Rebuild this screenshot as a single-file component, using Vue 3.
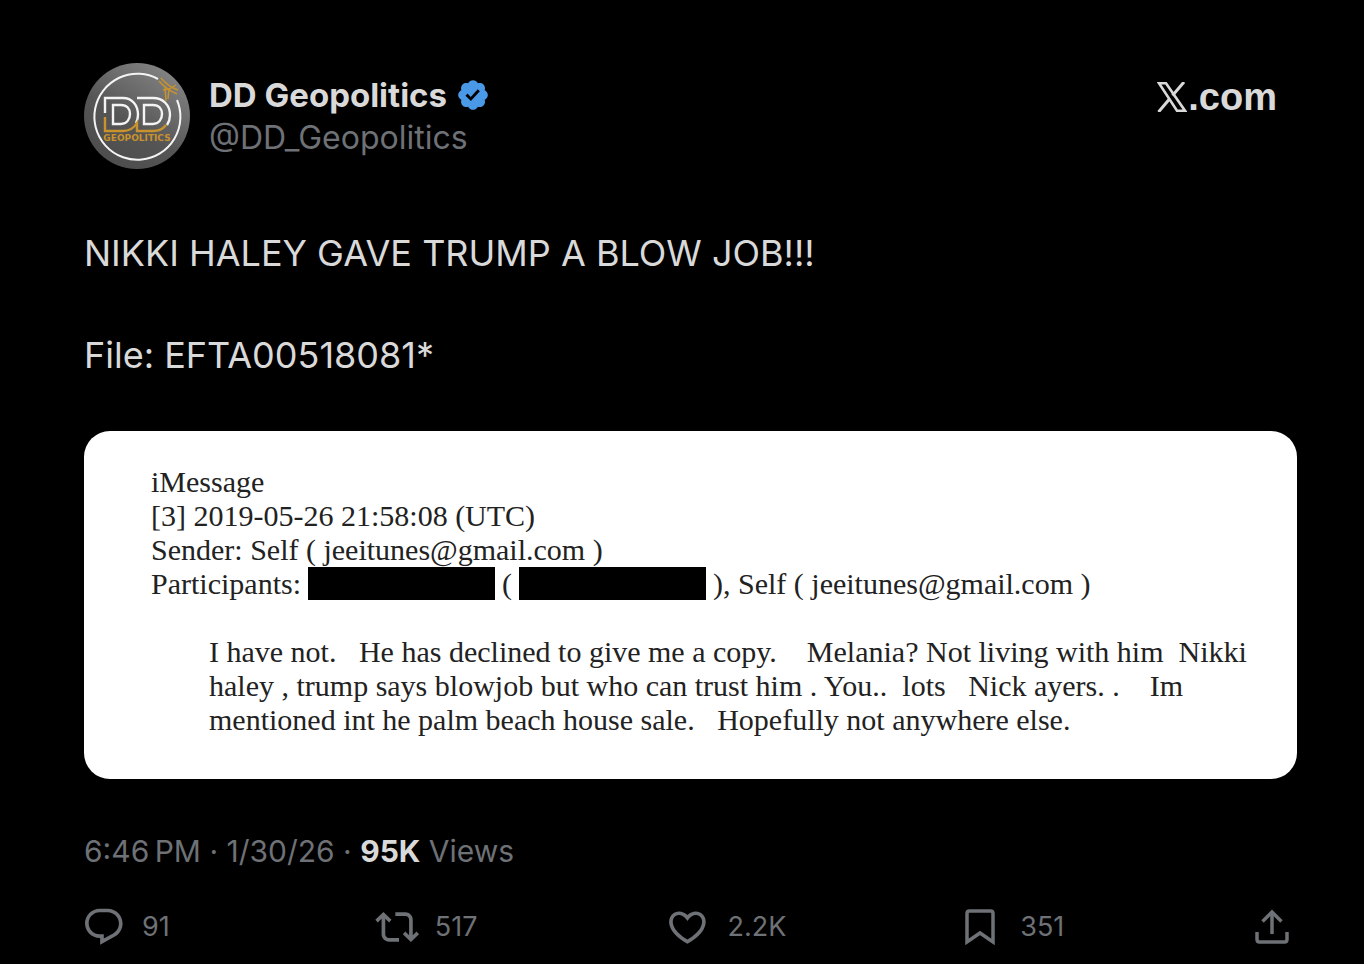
<script setup>
import { ref } from 'vue'

const author = {
  name: 'DD Geopolitics',
  handle: '@DD_Geopolitics'
}

const paragraphs = [
  'NIKKI HALEY GAVE TRUMP A BLOW JOB!!!',
  'File: EFTA00518081*'
]

// Spacing inside the message is kept as typed
const messageLines = [
  'I have not.   He has declined to give me a copy.    Melania? Not living with him  Nikki',
  'haley , trump says blowjob but who can trust him . You..  lots   Nick ayers. .    Im',
  'mentioned int he palm beach house sale.   Hopefully not anywhere else.'
]

const stats = ref({
  replies: '91',
  reposts: '517',
  likes: '2.2K',
  bookmarks: '351'
})
</script>

<template>
  <article class="post">
    <header class="post-header">
      <svg class="avatar" viewBox="0 0 106 106" aria-hidden="true">
        <defs>
          <linearGradient id="disc" x1="0.1" y1="1" x2="0.75" y2="0">
            <stop offset="0" stop-color="#4b4b4c" />
            <stop offset="0.45" stop-color="#555556" />
            <stop offset="1" stop-color="#858586" />
          </linearGradient>
        </defs>
        <circle cx="53" cy="53" r="53" fill="url(#disc)" />
        <g fill="none" stroke="#f4f4f4" stroke-width="2.4">
          <path d="M74 16A43 43 0 1 0 93 37" stroke-width="2" />
          <path d="M21 50V35H39C48 35 54 42 54 52C54 55 53 58 52 60" />
          <path d="M53 35H69C79 35 86 42 86 52C86 56 85 59 83 62" />
          <path d="M29 42H37C43 42 46 46 46 51C46 56 43 61 37 61H29Z" />
          <path d="M60 42H69C75 42 78 46 78 51C78 56 75 61 69 61H60Z" />
        </g>
        <g fill="none" stroke="#c8922d" stroke-width="2.4">
          <path d="M21 54V68H39C45 68 50 65 53 60V68H69C75 68 79 66 82 62" />
          <path d="M75 18C80 24 86 28 93 31M77 15C82 21 88 25 94 27M81 24L82 38M85 25L84 36M79 27C84 27 88 25 92 22" stroke-width="1.5" />
        </g>
        <text class="avatar-text" x="53" y="78" text-anchor="middle">GEOPOLITICS</text>
      </svg>
      <div class="author">
        <div class="name-row">
          <span class="name">{{ author.name }}</span>
          <svg class="badge" viewBox="1.5 1.5 19 19" role="img" aria-label="Verified account">
            <path fill="#4a99e9" d="M20.396 11c-.018-.646-.215-1.275-.57-1.816-.354-.54-.852-.972-1.438-1.246.223-.607.27-1.264.14-1.897-.131-.634-.437-1.218-.882-1.687-.47-.445-1.053-.75-1.687-.882-.633-.13-1.29-.083-1.897.14-.273-.587-.704-1.086-1.245-1.44S11.647 1.62 11 1.604c-.646.017-1.273.213-1.813.568s-.969.854-1.24 1.44c-.608-.223-1.267-.272-1.902-.14-.635.13-1.22.436-1.69.882-.445.47-.749 1.055-.878 1.688-.13.633-.08 1.29.144 1.896-.587.274-1.087.705-1.443 1.245-.356.54-.555 1.17-.574 1.817.02.647.218 1.276.574 1.817.356.54.856.972 1.443 1.245-.224.606-.274 1.263-.144 1.896.13.634.433 1.218.877 1.688.47.443 1.054.747 1.687.878.633.132 1.29.084 1.897-.136.274.586.705 1.084 1.246 1.439.54.354 1.17.551 1.816.569.647-.016 1.276-.213 1.817-.567s.972-.854 1.245-1.44c.604.239 1.266.296 1.903.164.636-.132 1.22-.447 1.68-.907.46-.46.776-1.044.908-1.681s.075-1.299-.165-1.903c.586-.274 1.084-.705 1.439-1.246.354-.54.551-1.17.569-1.816z" />
            <path fill="#000" d="M9.662 14.85l-3.429-3.428 1.293-1.302 2.072 2.072 4.4-4.794 1.347 1.246z" />
          </svg>
        </div>
        <a class="handle" href="#">{{ author.handle }}</a>
      </div>
      <a class="site" href="#" aria-label="X.com">
        <svg class="site-logo" viewBox="0 0 30 30" aria-hidden="true">
          <path d="M2 1.300H9L28 28.700H20Z" fill="none" stroke="#d9d9d9" stroke-width="2.6" />
          <path d="M27 0L15.500 13.500M1.500 30L12.500 17" fill="none" stroke="#d9d9d9" stroke-width="3" />
        </svg>
        <span>.com</span>
      </a>
    </header>

    <div class="post-text">
      <p v-for="text in paragraphs" :key="text">{{ text }}</p>
    </div>

    <section class="document">
      <p>iMessage</p>
      <p>[3] 2019-05-26 21:58:08 (UTC)</p>
      <p>Sender: Self ( jeeitunes@gmail.com )</p>
      <p class="participants">
        <span>Participants:</span>
        <span class="redacted"></span>
        <span>(</span>
        <span class="redacted"></span>
        <span>), Self ( jeeitunes@gmail.com )</span>
      </p>
      <div class="message">
        <p v-for="line in messageLines" :key="line">{{ line }}</p>
      </div>
    </section>

    <p class="meta">6:46&#8239;PM · 1/30/26 · <strong>95K</strong> Views</p>

    <footer class="actions">
      <button type="button" class="action">
        <svg viewBox="1.2 0 24 24" aria-hidden="true">
          <path fill="currentColor" d="M1.751 10c0-4.42 3.584-8 8.005-8h4.366c4.49 0 8.129 3.64 8.129 8.13 0 2.96-1.607 5.68-4.196 7.11l-8.054 4.46v-3.69h-.067c-4.49.1-8.183-3.51-8.183-8.01zm8.005-6c-3.317 0-6.005 2.69-6.005 6 0 3.37 2.77 6.08 6.138 6.01l.351-.01h1.761v2.3l5.087-2.81c1.951-1.08 3.163-3.13 3.163-5.36 0-3.39-2.744-6.13-6.129-6.13H9.756z" />
        </svg>
        <span>{{ stats.replies }}</span>
      </button>
      <button type="button" class="action">
        <svg viewBox="1 0 24 24" aria-hidden="true">
          <path fill="currentColor" d="M4.5 3.88l4.432 4.14-1.364 1.46L5.5 7.55V16c0 1.1.896 2 2 2H13v2H7.5c-2.209 0-4-1.79-4-4V7.55L1.432 9.48.068 8.02 4.5 3.88zM16.5 6H11V4h5.5c2.209 0 4 1.79 4 4v8.45l2.068-1.93 1.364 1.46-4.432 4.14-4.432-4.14 1.364-1.46 2.068 1.93V8c0-1.1-.896-2-2-2z" />
        </svg>
        <span>{{ stats.reposts }}</span>
      </button>
      <button type="button" class="action">
        <svg viewBox="2.5 0 24 24" aria-hidden="true">
          <path fill="currentColor" d="M16.697 5.5c-1.222-.06-2.679.51-3.89 2.16l-.805 1.09-.806-1.09C9.984 6.01 8.526 5.44 7.304 5.5c-1.243.07-2.349.78-2.91 1.91-.552 1.12-.633 2.78.479 4.82 1.074 1.97 3.257 4.27 7.129 6.61 3.87-2.34 6.052-4.64 7.126-6.61 1.111-2.04 1.03-3.7.477-4.82-.561-1.13-1.666-1.84-2.908-1.91zm4.187 7.69c-1.351 2.48-4.001 5.12-8.379 7.67l-.503.3-.504-.3c-4.379-2.55-7.029-5.19-8.382-7.67-1.36-2.5-1.41-4.86-.514-6.67.887-1.79 2.647-2.91 4.601-3.01 1.651-.09 3.368.56 4.798 2.01 1.429-1.45 3.146-2.1 4.796-2.01 1.954.1 3.714 1.22 4.601 3.01.896 1.81.846 4.17-.514 6.67z" />
        </svg>
        <span>{{ stats.likes }}</span>
      </button>
      <button type="button" class="action">
        <svg viewBox="-3 0 44 44" aria-hidden="true">
          <path fill="none" stroke="currentColor" stroke-width="3.500" d="M2 37V8.500Q2 6 4.500 6H25.500Q28 6 28 8.500V37L15 28Z" />
        </svg>
        <span>{{ stats.bookmarks }}</span>
      </button>
      <button type="button" class="action" aria-label="Share">
        <svg class="share" viewBox="0 0 34 44" aria-hidden="true">
          <path fill="none" stroke="currentColor" stroke-width="3.500" d="M17 29V7M7.500 16.500L17 7L26.500 16.500M2 27V34.500Q2 37 4.500 37H29.500Q32 37 32 34.500V27" />
        </svg>
      </button>
    </footer>
  </article>
</template>

<style>
body { margin: 0; background: #000; }
</style>

<style scoped>
.post {
  box-sizing: border-box; min-height: 100vh; padding: 63px 67px 0 84px;
  background: #000; color: #d9d9d9; font-family: Inter, "Liberation Sans", sans-serif;
}
.post p { margin: 0; }
.post a { color: inherit; text-decoration: none; }

.post-header { display: flex; align-items: flex-start; gap: 19px; }
.avatar { width: 106px; height: 106px; flex: none; }
.avatar-text { font: bold 9px "DejaVu Sans", sans-serif; fill: #c8922d; }
.author { flex: 1; padding-top: 11px; }
.name-row { display: flex; align-items: center; gap: 11px; }
.name { font-size: 33px; line-height: 42px; font-weight: 700; }
.badge { width: 30px; height: 30px; }
.post .handle { display: block; font-size: 32px; line-height: 44px; color: #6e7175; }
.site {
  display: flex; align-items: center; gap: 1px; padding: 12px 20px 0 0;
  font: bold 38px/44px "Liberation Sans", Arial, sans-serif;
}
.site-logo { width: 30px; height: 30px; }

.post-text { margin-top: 59px; font-size: 36px; line-height: 51px; }
.post .post-text p + p { margin-top: 51px; }

.document {
  margin-top: 50px; padding: 34px 40px 42px 67px; border-radius: 26px;
  background: #fff; color: #222; font: 30px/34px "Liberation Serif", "Times New Roman", serif;
}
.participants { display: flex; flex-wrap: wrap; gap: 7px; }
.redacted { width: 187px; height: 33px; background: #000; }
.message { margin-top: 34px; padding-left: 58px; }
.message p { white-space: pre; }

.post .meta { margin-top: 50px; font-size: 30px; line-height: 44px; color: #6e7175; }
.meta strong { font-weight: 700; color: #d9d9d9; }

.actions { display: grid; grid-template-columns: repeat(4, 1fr) auto; margin-top: 32px; padding-right: 8px; }
.action {
  display: flex; align-items: center; gap: 14px; padding: 0; border: 0;
  background: none; color: #6e7175; font: 27px/44px Inter, sans-serif; cursor: pointer;
}
.action svg { width: 44px; height: 44px; overflow: visible; }
.action .share { width: 34px; }
</style>
